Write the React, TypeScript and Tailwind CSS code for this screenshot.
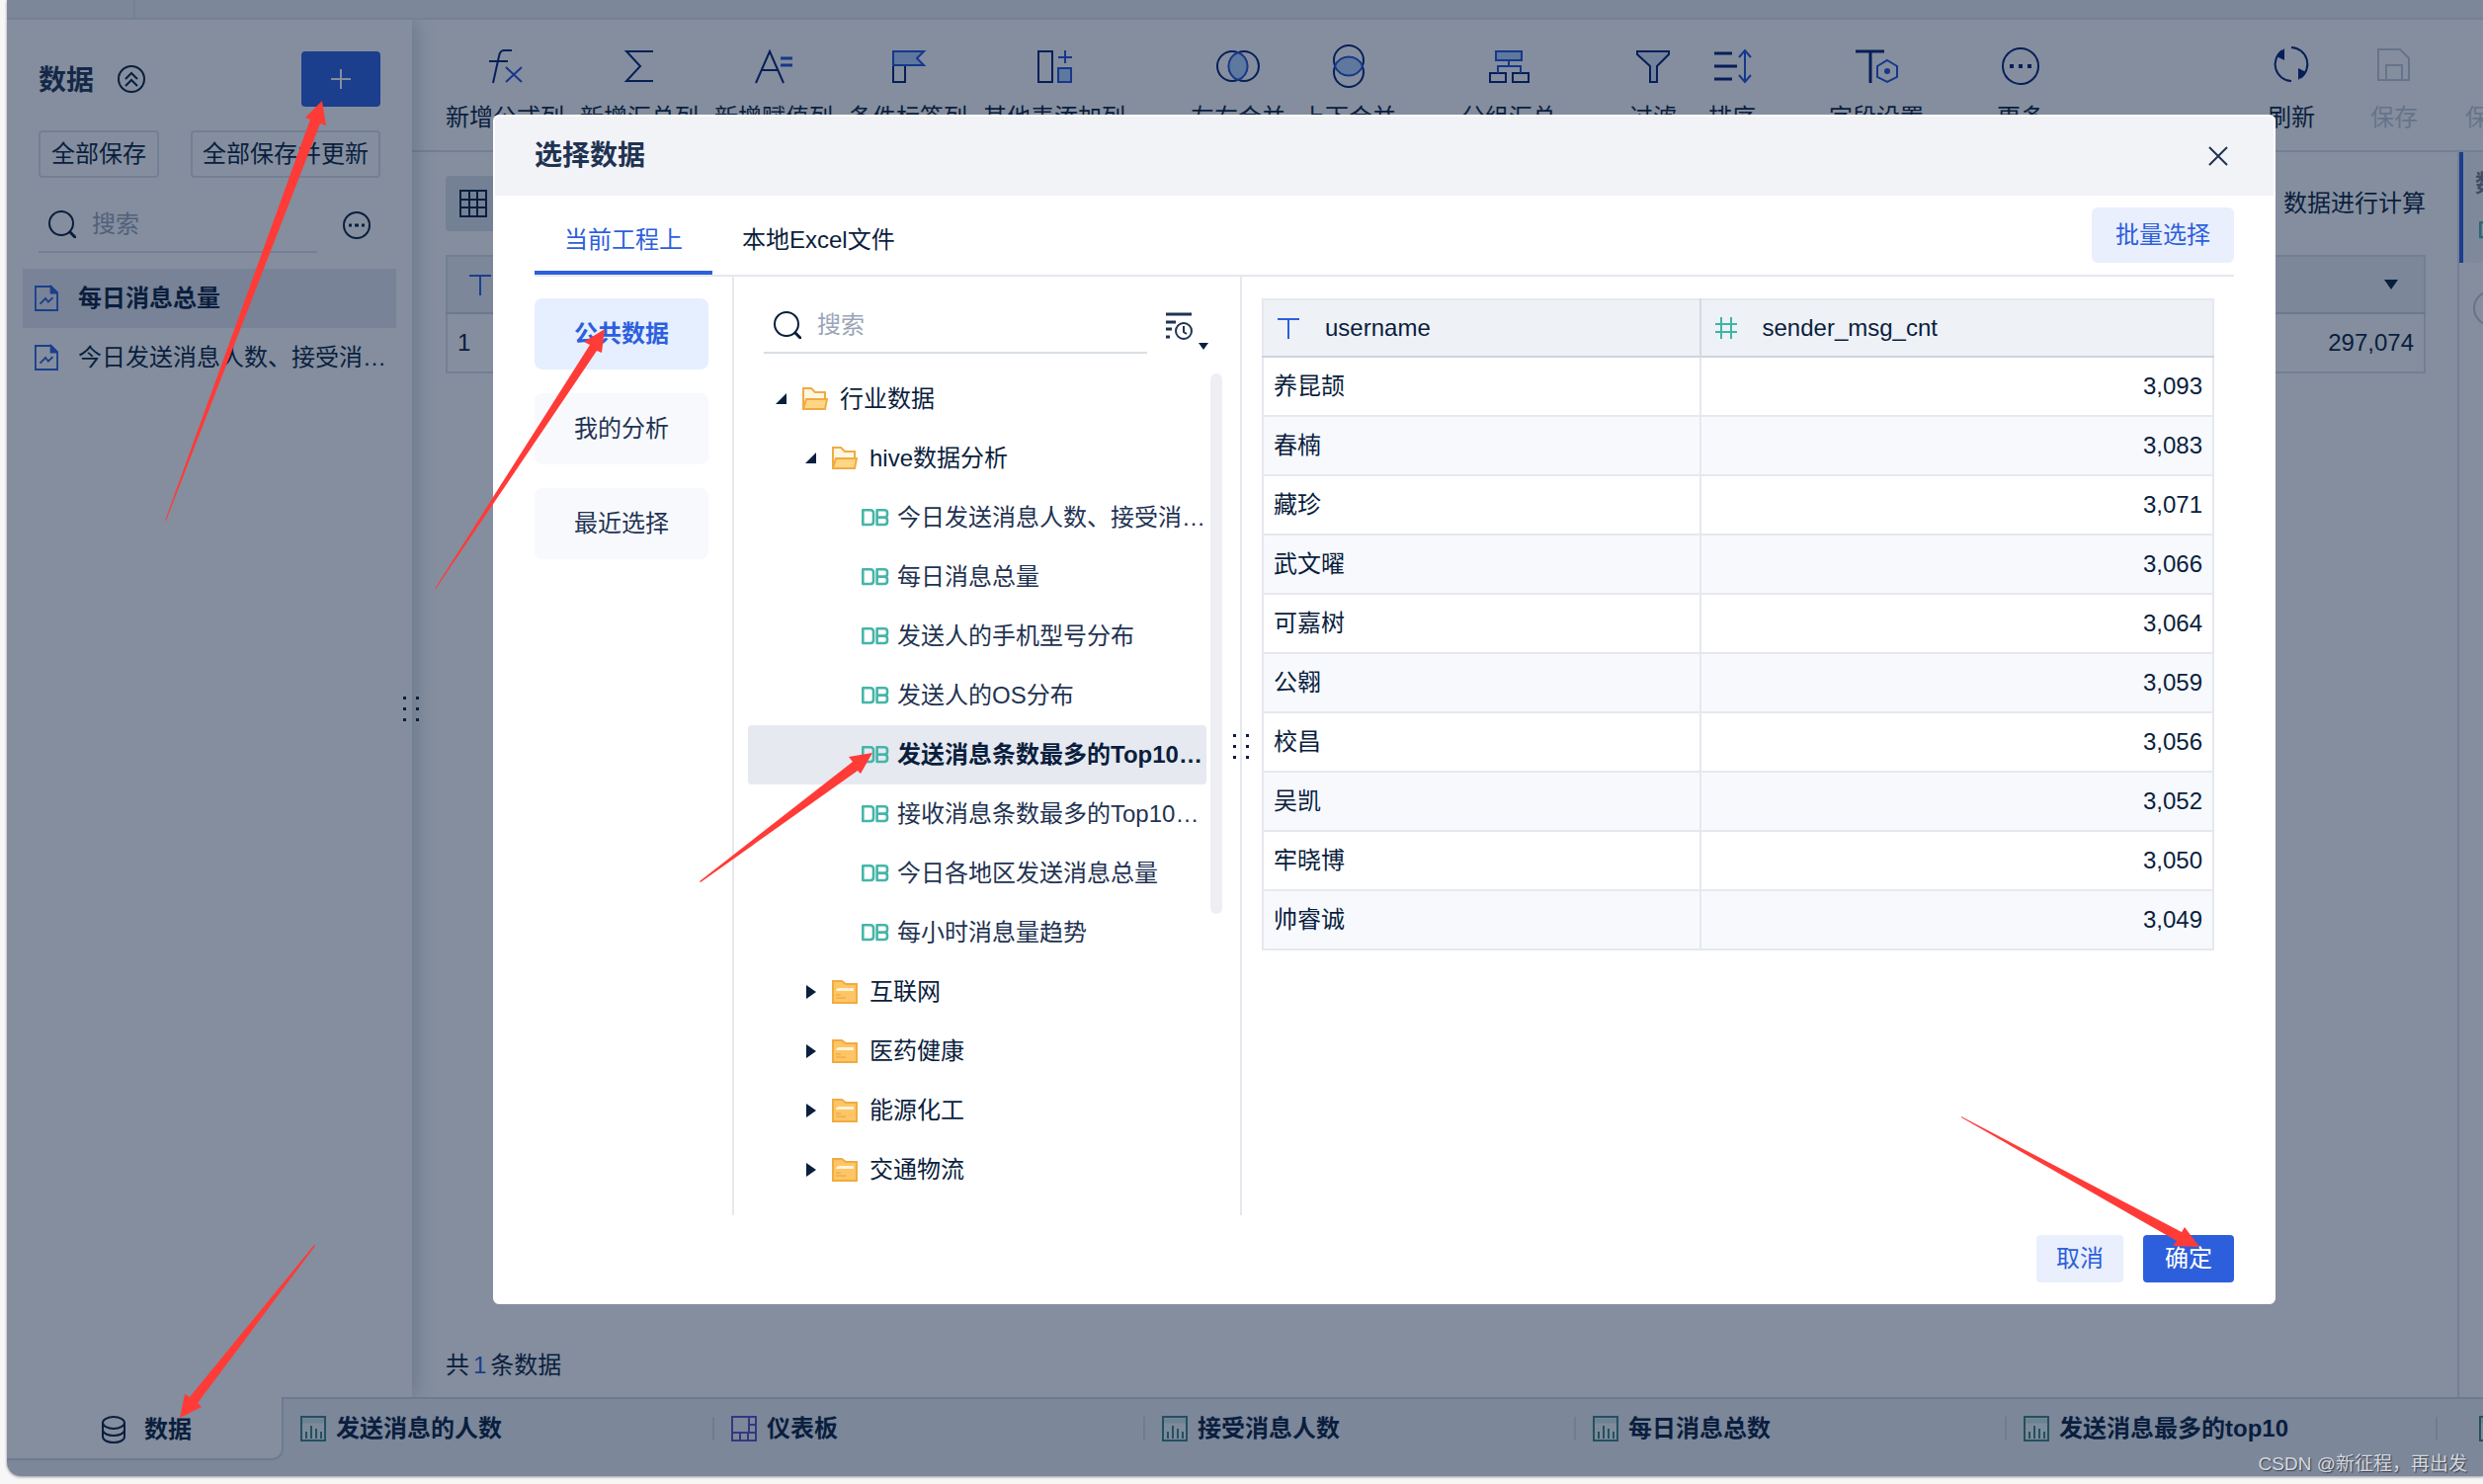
import React from "react";

const NAVY = "#042072";
const BLUE = "#2450d8";
const FILL = "#b4d2ff";

function ToolIcon({ children, color = NAVY }: { children: React.ReactNode; color?: string }) {
  return (
    <svg viewBox="0 0 40 40" className="size-10 overflow-visible" fill="none" stroke={color} strokeWidth="2" aria-hidden="true">
      {children}
    </svg>
  );
}

const icons: Record<string, React.ReactNode> = {
  formula: (
    <ToolIcon>
      <path d="M8 37 14 10Q15 4 19 4H27M4 15H23" />
      <path d="M21 21 37 36M37 21 21 36" stroke={BLUE} />
    </ToolIcon>
  ),
  sum: (
    <ToolIcon>
      <path d="M34 5H7L21 20 7 35H34" />
    </ToolIcon>
  ),
  assign: (
    <ToolIcon>
      <path d="M2 37 16 5 30 37M7 24H25" />
      <path d="M27 12H39M27 19H39" stroke={BLUE} strokeWidth="3" />
    </ToolIcon>
  ),
  flag: (
    <ToolIcon>
      <path d="M5 20V36H17V20" />
      <path d="M5 5H36L29 12 36 19H5Z" fill={FILL} stroke={BLUE} />
    </ToolIcon>
  ),
  column: (
    <ToolIcon>
      <path d="M4 5H18V36H4Z" />
      <path d="M31 4V17M24 11H38" stroke={BLUE} />
      <path d="M24 22H37V36H24Z" fill={FILL} stroke={BLUE} />
    </ToolIcon>
  ),
  mergeH: (
    <ToolIcon>
      <circle cx="14" cy="20" r="15" />
      <circle cx="26" cy="20" r="15" />
      <path d="M20 6A15 15 0 0 1 20 34A15 15 0 0 1 20 6Z" fill={FILL} stroke={BLUE} />
    </ToolIcon>
  ),
  mergeV: (
    <ToolIcon>
      <circle cx="20" cy="14" r="15" />
      <circle cx="20" cy="26" r="15" />
      <path d="M6 20A15 15 0 0 1 34 20A15 15 0 0 1 6 20Z" fill={FILL} stroke={BLUE} />
    </ToolIcon>
  ),
  group: (
    <ToolIcon>
      <path d="M1 27H17V36H1ZM24 27H40V36H24Z" />
      <path d="M20 14V20M9 27V20H32V27" stroke={BLUE} />
      <path d="M7 5H33V14H7Z" fill={FILL} stroke={BLUE} />
    </ToolIcon>
  ),
  filter: (
    <ToolIcon>
      <path d="M4 5H36V8L24 20V36H17V20L4 8Z" fill="#dfe6fa" />
    </ToolIcon>
  ),
  sort: (
    <ToolIcon>
      <path d="M2 7H20M2 20H25M2 33H20" strokeWidth="3" />
      <path d="M33 4V36M27 11 33 4 39 11M27 29 33 36 39 29" stroke={BLUE} />
    </ToolIcon>
  ),
  field: (
    <ToolIcon>
      <path d="M-1 5H28M14 5V37" strokeWidth="3" />
      <path d="M31 14 41 20V31L31 36 21 31V20Z" stroke={BLUE} />
      <circle cx="31" cy="25" r="3" fill={BLUE} stroke="none" />
    </ToolIcon>
  ),
  more: (
    <ToolIcon>
      <circle cx="20" cy="20" r="18" />
      <path d="M9 20H13M18 20H22M27 20H31" strokeWidth="4" />
    </ToolIcon>
  ),
  refresh: (
    <ToolIcon>
      <path d="M20 35A17 17 0 0 1 11 4M20 1A17 17 0 0 1 29 32" />
      <path d="M13 2V14L5 10ZM27 34V22L35 26Z" fill={NAVY} stroke="none" />
    </ToolIcon>
  ),
  save: (
    <ToolIcon color="#c3cad8">
      <path d="M4 3H26L35 12V34H4ZM12 34V19H28V34" />
    </ToolIcon>
  ),
};

function Tool({ icon, label, muted = false }: { icon: string; label: string; muted?: boolean }) {
  return (
    <button
      className={
        "flex min-w-16 shrink-0 flex-col items-center gap-3.5 whitespace-nowrap leading-9 " +
        (muted ? "text-[#c3cad8]" : "text-[#0a1e3d]")
      }
    >
      {icons[icon]}
      {label}
    </button>
  );
}

function ToolDivider() {
  return <span className="mx-8 mt-[83px] h-6 w-0.5 shrink-0 bg-[#dce1ea]" />;
}

function SearchIcon() {
  return (
    <svg viewBox="0 0 28 28" className="size-7 shrink-0" fill="none" stroke="#0a1e3d" strokeWidth="2" aria-hidden="true">
      <circle cx="13" cy="13" r="12" />
      <path d="M21 21 28 28" strokeWidth="3" />
    </svg>
  );
}

function SheetIcon() {
  return (
    <svg viewBox="0 0 26 28" className="h-7 w-6 shrink-0" fill="none" stroke="#2d5fdd" strokeWidth="2" aria-hidden="true">
      <path d="M1 1H18L25 8V27H1Z" />
      <path d="M18 1V8H25Z" fill="#2d5fdd" />
      <path d="M6 20 12 14 15 18 20 13" />
    </svg>
  );
}

function TextTypeIcon() {
  return (
    <svg viewBox="0 0 22 22" className="size-[22px] shrink-0" fill="none" stroke="#2d5fdd" strokeWidth="2" aria-hidden="true">
      <path d="M0 2H22M11 2V22" />
    </svg>
  );
}

function NumberTypeIcon() {
  return (
    <svg viewBox="0 0 22 22" className="size-[22px] shrink-0" fill="none" stroke="#3cb6a6" strokeWidth="2" aria-hidden="true">
      <path d="M0 7H22M0 15H22M6 0V22M16 0V22" />
    </svg>
  );
}

function FolderOpen() {
  return (
    <svg viewBox="0 0 26 24" className="h-6 w-[26px] shrink-0" stroke="#f0ab42" strokeWidth="2" aria-hidden="true">
      <path d="M1 22V1H9L13 5H23V12" fill="#fff6e0" />
      <path d="M4 12H25L23 22H1Z" fill="#ffd684" />
    </svg>
  );
}

function FolderClosed() {
  return (
    <svg viewBox="0 0 26 24" className="h-6 w-[26px] shrink-0" fill="none" aria-hidden="true">
      <path d="M1 1H10L14 4H25V23H1Z" fill="#fdc565" stroke="#f0ab42" strokeWidth="2" />
      <path d="M4 11Q4 8 8 8H22V11Z" fill="#fff3d4" />
      <path d="M4 15H9M4 18H14" stroke="#e9a23b" />
    </svg>
  );
}

function DbIcon() {
  return (
    <svg viewBox="0 0 28 18" className="h-[18px] w-7 shrink-0" fill="none" stroke="#45b5a8" strokeWidth="2.6" strokeLinejoin="round" aria-hidden="true">
      <path d="M1.3 1.3H9Q12 1.3 12 4.3V13Q12 16 9 16H1.3Z" />
      <path d="M15.6 1.3H23Q26 1.3 26 4V6Q26 8.6 23 8.6H15.6ZM15.6 8.6H23Q26 8.6 26 11.5V13Q26 16 23 16H15.6Z" />
    </svg>
  );
}

function Grip() {
  return (
    <svg viewBox="0 0 18 26" className="h-[26px] w-[18px]" fill="#0a1e3d" aria-hidden="true">
      {[1, 12, 23].map((y) => (
        <React.Fragment key={y}>
          <rect x="1" y={y} width="3" height="3" />
          <rect x="14" y={y} width="3" height="3" />
        </React.Fragment>
      ))}
    </svg>
  );
}

function ChartTabIcon() {
  return (
    <svg viewBox="0 0 26 26" className="size-[26px] shrink-0" fill="none" stroke="#3f8383" strokeWidth="2" aria-hidden="true">
      <path d="M1 1H25V25H1Z" fill="#eef8f8" />
      <path d="M2 5H24" stroke="#cfe6e8" strokeWidth="5" />
      <path d="M6 23V16M11 23V10M16 23V13M21 23V16" />
    </svg>
  );
}

function BoardTabIcon() {
  return (
    <svg viewBox="0 0 26 26" className="size-[26px] shrink-0" fill="none" stroke="#5c52c0" strokeWidth="2" aria-hidden="true">
      <path d="M1 1H25V25H1ZM1 17H25M18 1V17M18 9H25M9 17V25M17 17V25" />
    </svg>
  );
}

const bottomTabs = [
  { label: "发送消息的人数", board: false },
  { label: "仪表板", board: true },
  { label: "接受消息人数", board: false },
  { label: "每日消息总数", board: false },
  { label: "发送消息最多的top10", board: false },
];

const datasets = [
  "今日发送消息人数、接受消息人数",
  "每日消息总量",
  "发送人的手机型号分布",
  "发送人的OS分布",
  "发送消息条数最多的Top10用户",
  "接收消息条数最多的Top10用户",
  "今日各地区发送消息总量",
  "每小时消息量趋势",
];

const folders = ["互联网", "医药健康", "能源化工", "交通物流"];

const rows = [
  ["养昆颉", "3,093"],
  ["春楠", "3,083"],
  ["藏珍", "3,071"],
  ["武文曜", "3,066"],
  ["可嘉树", "3,064"],
  ["公翱", "3,059"],
  ["校昌", "3,056"],
  ["吴凯", "3,052"],
  ["牢晓博", "3,050"],
  ["帅睿诚", "3,049"],
];

function Sidebar() {
  return (
    <aside className="relative z-10 flex w-[410px] shrink-0 flex-col bg-white shadow-[4px_0_20px_rgba(40,80,90,0.25)]">
      <div className="flex items-center px-8 pt-8">
        <h1 className="pt-1 text-[28px] font-bold text-[#1f3352]">数据</h1>
        <button aria-label="折叠" className="ml-6">
          <svg viewBox="0 0 28 28" className="size-7" fill="none" stroke="#0a1e3d" strokeWidth="2">
            <circle cx="14" cy="14" r="13" />
            <path d="M8 14 14 8 20 14M8 21 14 15 20 21" />
          </svg>
        </button>
        <button aria-label="新增" className="ml-auto flex h-14 w-20 items-center justify-center rounded bg-[#2d5fdd]">
          <svg viewBox="0 0 20 20" className="size-5" stroke="#ffffff" strokeWidth="2">
            <path d="M0 10H20M10 0V20" />
          </svg>
        </button>
      </div>
      <div className="mt-6 flex justify-between px-8">
        <button className="h-12 rounded border-2 border-[#dce1ea] px-[11px]">全部保存</button>
        <button className="h-12 rounded border-2 border-[#dce1ea] px-[10px]">全部保存并更新</button>
      </div>
      <div className="mt-5 flex items-center px-8">
        <label className="flex h-14 w-[282px] items-center gap-4 border-b-2 border-[#dce1ea] pl-2.5">
          <SearchIcon />
          <input placeholder="搜索" aria-label="搜索数据表" className="w-0 flex-1 bg-transparent outline-none placeholder:text-[#9ba5b7]" />
        </label>
        <button aria-label="更多操作" className="ml-[26px]">
          <svg viewBox="0 0 28 28" className="size-7" fill="none" stroke="#0a1e3d" strokeWidth="2">
            <circle cx="14" cy="14" r="13" />
            <path d="M6 14H9M12 14H16M19 14H22" strokeWidth="3" />
          </svg>
        </button>
      </div>
      <ul className="mt-4 px-4">
        <li className="flex h-[60px] items-center gap-5 bg-[#e6e8f1] pr-2 pl-3 font-bold">
          <SheetIcon />
          <span className="truncate">每日消息总量</span>
        </li>
        <li className="flex h-[60px] items-center gap-5 pr-2 pl-3">
          <SheetIcon />
          <span className="truncate">今日发送消息人数、接受消息人数</span>
        </li>
      </ul>
      <div className="absolute top-1/2 -right-2 -translate-y-1/2">
        <Grip />
      </div>
    </aside>
  );
}

function Workspace() {
  return (
    <main className="flex min-w-0 flex-1 flex-col">
      <div className="flex h-[134px] shrink-0 overflow-hidden border-b-2 border-[#dce1ea] pl-[34px]">
        <div className="flex flex-1 items-start pt-[27px]">
          <div className="flex gap-4">
            <Tool icon="formula" label="新增公式列" />
            <Tool icon="sum" label="新增汇总列" />
            <Tool icon="assign" label="新增赋值列" />
            <Tool icon="flag" label="条件标签列" />
            <Tool icon="column" label="其他表添加列" />
          </div>
          <ToolDivider />
          <div className="flex gap-4">
            <Tool icon="mergeH" label="左右合并" />
            <Tool icon="mergeV" label="上下合并" />
          </div>
          <ToolDivider />
          <Tool icon="group" label="分组汇总" />
          <ToolDivider />
          <div className="flex gap-4">
            <Tool icon="filter" label="过滤" />
            <Tool icon="sort" label="排序" />
          </div>
          <ToolDivider />
          <Tool icon="field" label="字段设置" />
          <ToolDivider />
          <Tool icon="more" label="更多" />
          <div className="ml-auto flex items-start gap-10">
            <Tool icon="refresh" label="刷新" />
            <Tool icon="save" label="保存" muted />
            <button className="mt-[54px] w-[18px] overflow-hidden text-left leading-9 whitespace-nowrap text-[#c3cad8]">保存并更新</button>
          </div>
        </div>
      </div>
      <div className="flex flex-1">
        <div className="flex min-w-0 flex-1 flex-col pr-8 pl-[34px]">
          <div className="mt-6 flex h-14 items-center justify-between">
            <button aria-label="表格视图" className="flex h-14 w-14 items-center justify-center rounded bg-[#dfe5ea]">
              <svg viewBox="0 0 28 28" className="size-7" fill="none" stroke="#0a1e3d" strokeWidth="2">
                <path d="M1 1H27V27H1ZM1 10H27M1 18H27M10 1V27M18 1V27" />
              </svg>
            </button>
            <span>数据进行计算</span>
          </div>
          <table className="mt-6 w-full border-2 border-[#dce1ea]">
            <thead>
              <tr className="h-[58px] border-b-2 border-[#cfd5e2] bg-[#eef0f7]">
                <th className="pl-[22px]">
                  <TextTypeIcon />
                </th>
                <th className="pr-[26px]">
                  <svg viewBox="0 0 14 10" className="ml-auto h-2.5 w-3.5" fill="#0a1e3d" aria-label="展开">
                    <path d="M0 0H14L7 10Z" />
                  </svg>
                </th>
              </tr>
            </thead>
            <tbody>
              <tr className="h-[60px]">
                <td className="pl-[10px]">1</td>
                <td className="pr-[10px] text-right">297,074</td>
              </tr>
            </tbody>
          </table>
          <p className="mt-auto mb-3.5">
            共<span className="mx-1 text-[#2d5fdd]">1</span>条数据
          </p>
        </div>
        <aside className="w-[26px] shrink-0 overflow-hidden border-l-2 border-[#dce1ea]">
          <div className="h-28 border-l-4 border-[#2d5fdd] bg-[#f2f5fa] pt-4 pl-3">
            <div className="leading-8 font-bold whitespace-nowrap text-[#717d93]">数据</div>
            <div className="mt-[22px] ml-1">
              <DbIcon />
            </div>
          </div>
          <div className="mt-7 ml-3.5 size-9 rounded-full border-2 border-[#c3cad8]" />
        </aside>
      </div>
    </main>
  );
}

function TreeToggle({ open }: { open: boolean }) {
  return (
    <svg viewBox="0 0 12 14" className="h-3.5 w-3 shrink-0" fill="#0a1e3d" aria-hidden="true">
      <path d={open ? "M11 1V12H0Z" : "M1 0 11 7 1 14Z"} />
    </svg>
  );
}

function DataDialog() {
  return (
    <div role="dialog" aria-label="选择数据" className="flex flex-1 flex-col overflow-hidden rounded-md border-2 border-white bg-white">
      <header className="flex h-20 shrink-0 items-center justify-between bg-[#f2f3f7] pr-[46px] pl-10">
        <h2 className="text-[28px] font-bold text-[#1f3352]">选择数据</h2>
        <button aria-label="关闭">
          <svg viewBox="0 0 20 20" className="size-5" fill="none" stroke="#1f3352" strokeWidth="2">
            <path d="M1 1 19 19M19 1 1 19" />
          </svg>
        </button>
      </header>
      <div className="mx-10 flex h-[82px] shrink-0 items-center border-b-2 border-[#e6e8ef]">
        <button className="h-20 border-b-4 border-[#2d5fdd] px-[30px] pt-[14px] text-[#2d5fdd]">当前工程上</button>
        <button className="h-20 px-[30px] pt-[10px]">本地Excel文件</button>
        <button className="ml-auto h-14 rounded-md bg-[#e9effc] px-6 text-[#2d5fdd]">批量选择</button>
      </div>
      <div className="mx-10 flex min-h-0 flex-1">
        <nav className="flex w-[202px] shrink-0 flex-col gap-6 border-r-2 border-[#e6e8ef] pt-[22px] pr-6">
          <button className="h-[72px] rounded-lg bg-[#e6efff] font-bold text-[#2d5fdd]">公共数据</button>
          <button className="h-[72px] rounded-lg bg-[#f8f9fd] text-[#1f3352]">我的分析</button>
          <button className="h-[72px] rounded-lg bg-[#f8f9fd] text-[#1f3352]">最近选择</button>
        </nav>
        <section className="relative flex w-[514px] shrink-0 flex-col border-r-2 border-[#e6e8ef] pt-[22px] pl-3.5">
          <div className="flex items-center pl-4">
            <label className="flex h-14 w-[388px] items-center gap-4 border-b-2 border-[#d9dee5] pl-2.5">
              <SearchIcon />
              <input placeholder="搜索" aria-label="搜索公共数据" className="w-0 flex-1 outline-none placeholder:text-[#9ba5b7]" />
            </label>
            <button aria-label="排序方式" className="ml-[18px]">
              <svg viewBox="0 0 46 40" className="h-10 w-[46px] overflow-visible" fill="none" stroke="#1f3352" strokeWidth="2">
                <path d="M1 8H27M1 16H11M1 23H7M1 31H5" strokeWidth="3" />
                <circle cx="19" cy="25" r="8" />
                <path d="M19 20V26L22 28" />
                <path d="M34 37H44L39 44Z" fill="#0a1e3d" stroke="none" />
              </svg>
            </button>
          </div>
          <div className="mt-4 flex gap-1">
            <ul className="w-[464px]">
              <li className="flex h-[60px] items-center gap-3 pl-7">
                <span className="flex items-center gap-[15px]">
                  <TreeToggle open />
                  <FolderOpen />
                </span>
                行业数据
              </li>
              <li className="flex h-[60px] items-center gap-3 pl-[58px]">
                <span className="flex items-center gap-[15px]">
                  <TreeToggle open />
                  <FolderOpen />
                </span>
                hive数据分析
              </li>
              {datasets.map((name, i) => (
                <li
                  key={name}
                  className={
                    "flex h-[60px] items-center gap-2 rounded pl-[115px] " +
                    (i === 4 ? "bg-[#e6e9f0] font-bold" : "text-[#1f3352]")
                  }
                >
                  <DbIcon />
                  <span className="truncate">{name}</span>
                </li>
              ))}
              {folders.map((name) => (
                <li key={name} className="flex h-[60px] items-center gap-3 pl-[58px]">
                  <span className="flex items-center gap-[15px]">
                    <TreeToggle open={false} />
                    <FolderClosed />
                  </span>
                  {name}
                </li>
              ))}
            </ul>
            <div className="mt-1 h-[547px] w-3 rounded-full bg-[#eeeff3]" />
          </div>
          <div className="absolute top-1/2 -right-2.5 -translate-y-1/2">
            <Grip />
          </div>
        </section>
        <section className="min-w-0 flex-1 px-5 pt-[22px]">
          <table className="w-full border-collapse border-2 border-[#e6e8ef]">
            <thead>
              <tr className="h-[58px] border-b-2 border-[#cfd4de] bg-[#eef1f6]">
                <th className="w-[46%] border-r-2 border-[#d5d9e2] pl-[14px] text-left font-normal">
                  <span className="flex items-center gap-[26px]">
                    <TextTypeIcon />
                    username
                  </span>
                </th>
                <th className="pl-[14px] text-left font-normal">
                  <span className="flex items-center gap-[26px]">
                    <NumberTypeIcon />
                    sender_msg_cnt
                  </span>
                </th>
              </tr>
            </thead>
            <tbody>
              {rows.map(([name, count]) => (
                <tr key={name} className="h-[60px] border-b-2 border-[#e6e8ef] even:bg-[#f7f9fd]">
                  <td className="border-r-2 border-[#e6e8ef] pl-[10px]">{name}</td>
                  <td className="pr-[10px] text-right">{count}</td>
                </tr>
              ))}
            </tbody>
          </table>
        </section>
      </div>
      <footer className="flex shrink-0 justify-end gap-5 px-10 py-5">
        <button className="h-12 rounded bg-[#e9effc] px-5 text-[#2d5fdd]">取消</button>
        <button className="h-12 rounded bg-[#2d5fdd] px-[22px] text-white">确定</button>
      </footer>
    </div>
  );
}

function Annotations() {
  return (
    <svg viewBox="0 0 2513 1502" className="pointer-events-none absolute top-0 left-0 z-40 w-full" fill="#ff3b38" aria-hidden="true">
      <path d="M326 102 309 119 314 121 167 527 168 527 324 125 330 127Z" />
      <path d="M612 333 591 346 597 349 440 596 441 596 604 355 609 357Z" />
      <path d="M883 762 859 766 863 771 708 892 709 893 868 780 871 783Z" />
      <path d="M182 1435 187 1411 192 1414 318 1260 319 1261 200 1420 204 1424Z" />
      <path d="M2226 1262 2211 1242 2208 1247 1985 1130 1985 1131 2203 1256 2199 1261Z" />
    </svg>
  );
}

export default function App() {
  return (
    <div
      lang="zh-CN"
      className="relative flex min-h-screen flex-col overflow-hidden bg-[#f7f7f7] pb-2 pl-[7px] text-[24px] leading-9 text-[#0a1e3d] [font-family:'Liberation_Sans','Noto_Sans_CJK_SC',sans-serif]"
    >
      <div className="relative flex flex-1 flex-col overflow-hidden rounded-bl-[14px] bg-[#eef0f7] shadow-[0_1px_3px_rgba(0,0,0,0.4)]">
        <div className="flex h-5 shrink-0 border-b-2 border-[#dfe4ec]">
          <div className="w-[130px] border-r-2 border-[#dfe4ec]" />
        </div>
        <div className="flex flex-1 overflow-hidden bg-white">
          <Sidebar />
          <Workspace />
        </div>
        <div className="flex h-20 shrink-0">
          <button className="relative z-20 flex h-16 w-[280px] shrink-0 items-center justify-center gap-[18px] rounded-br-xl border-r-2 border-b-2 border-[#d0d6e2] bg-white pt-1 pl-1 font-bold">
            <svg viewBox="0 0 26 28" className="h-7 w-[26px]" fill="none" stroke="#0a1e3d" strokeWidth="2">
              <ellipse cx="13" cy="7" rx="11" ry="6" />
              <path d="M2 7V21C2 29 24 29 24 21V7M2 14C2 22 24 22 24 14" />
            </svg>
            数据
          </button>
          <div className="flex min-w-0 flex-1 overflow-hidden border-t-2 border-[#d0d6e2]">
            {bottomTabs.map((tab) => (
              <button key={tab.label} className="flex h-[60px] w-[436px] shrink-0 items-center gap-2.5 pl-[17px] font-bold">
                {tab.board ? <BoardTabIcon /> : <ChartTabIcon />}
                {tab.label}
                <span className="ml-auto h-6 w-0.5 bg-[#d5dae5]" />
              </button>
            ))}
            <span className="flex h-[60px] items-center pl-[42px]">
              <ChartTabIcon />
            </span>
          </div>
        </div>
        <div className="absolute inset-0 z-30 flex bg-[rgba(10,30,61,0.5)] pt-[116px] pr-[210px] pb-[174px] pl-[492px]">
          <DataDialog />
        </div>
      </div>
      <Annotations />
      <div className="absolute right-4 bottom-1 z-50 text-[19px] leading-8 text-[#d5d8de] [text-shadow:1px_1px_1px_#333c4c]">
        CSDN @新征程，再出发
      </div>
    </div>
  );
}
